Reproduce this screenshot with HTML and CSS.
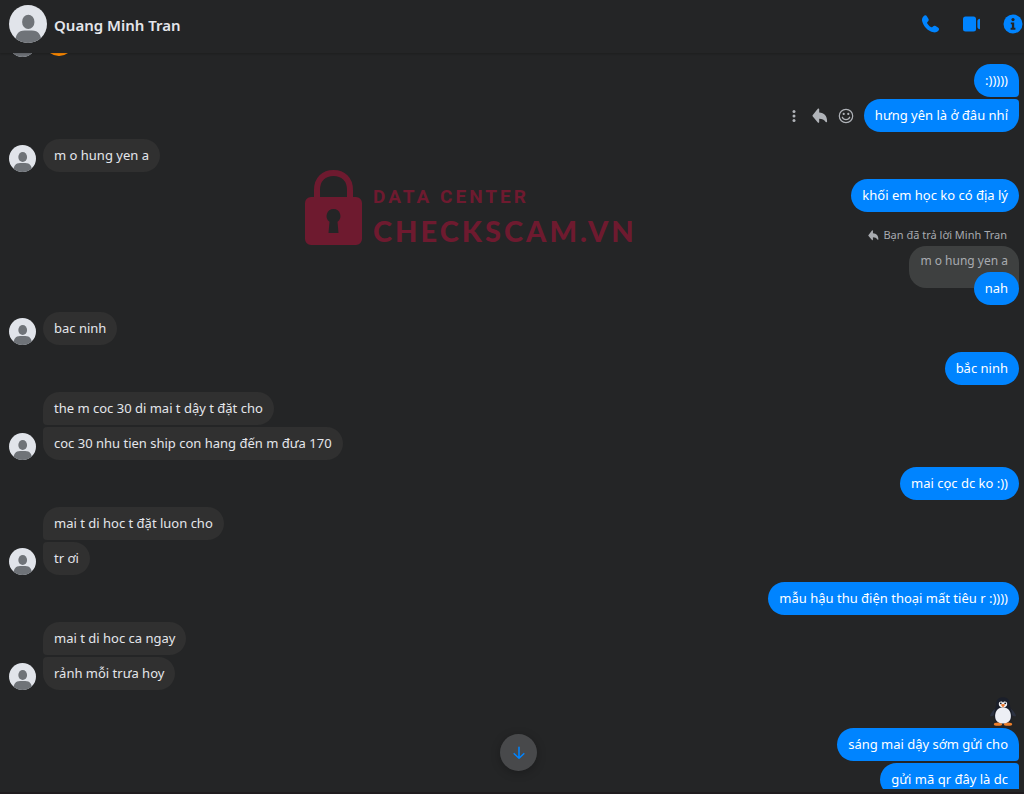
FILE: index.html
```html
<!DOCTYPE html>
<html lang="vi">
<head>
<meta charset="utf-8">
<meta name="viewport" content="width=device-width, initial-scale=1">
<title>Quang Minh Tran</title>
<link rel="stylesheet" href="styles.css">
</head>
<body>
<svg class="defs" aria-hidden="true">
  <defs>
    <clipPath id="disc"><circle cx="20" cy="20" r="20"/></clipPath>
    <symbol id="person" viewBox="0 0 40 40">
      <circle cx="20" cy="20" r="20" fill="#e1e4ea"/>
      <g clip-path="url(#disc)" fill="#6f7378">
        <ellipse cx="20.300" cy="17.800" rx="6.500" ry="7.500"/>
        <path d="M6.500 40c0-8.500 3-13.200 10-13.200h7.600c7 0 10 4.700 10 13.200z"/>
      </g>
    </symbol>
    <symbol id="reply" viewBox="0 0 16 16">
      <path d="M7.200 1.300v3.300c5 .3 8 3.500 7.900 8.900 0 .8-.9 1-1.400.4-1.500-2.100-3.500-3.100-6.500-3.200v3.200c0 .9-.8 1.200-1.400.6L.8 8.600c-.5-.5-.5-1 0-1.500L5.800.8c.6-.6 1.400-.3 1.400.5z" fill="currentColor"/>
    </symbol>
  </defs>
</svg>
<div class="app">
  <header class="header">
    <svg class="header-avatar" aria-hidden="true"><use href="#person"/></svg>
    <h1 class="title">Quang Minh Tran</h1>
    <div class="tools">
      <button class="tool" type="button" aria-label="Gọi thoại">
        <svg viewBox="0 0 20 20" fill="currentColor"><path d="M2.600 2.200C3.800 1 5.200 1.100 6 2.400l1.400 2.400c.6 1 .4 1.800-.4 2.600l-.6.600c-.4.400-.4.900-.1 1.400 1 1.600 2.100 2.700 3.700 3.700.5.300 1 .3 1.400-.1l.6-.6c.8-.8 1.600-1 2.600-.4l2.400 1.400c1.300.8 1.400 2.200.3 3.400-1.300 1.300-3 1.900-4.800 1.500C6.800 17 2.600 12.600 1.100 7c-.4-1.800.2-3.500 1.500-4.800z"/></svg>
      </button>
      <button class="tool" type="button" aria-label="Gọi video">
        <svg viewBox="0 0 20 20" fill="currentColor"><rect x="1" y="2.500" width="13" height="15" rx="2.500"/><path d="M15.400 7c0-.6.2-1 .7-1.400l.9-.7c.5-.4 1-.1 1 .5v9.200c0 .6-.5.900-1 .5l-.9-.7c-.5-.4-.7-.8-.7-1.400z"/></svg>
      </button>
      <button class="tool" type="button" aria-label="Thông tin">
        <svg viewBox="0 0 20 20"><circle cx="10" cy="10" r="9.500" fill="currentColor"/><circle cx="10" cy="5.600" r="1.600" fill="#242526"/><path d="M7.800 8.400h3.400v5.400h1.200v1.900H7.600v-1.900h1.300v-3.500H7.800z" fill="#242526"/></svg>
      </button>
    </div>
  </header>

  <main class="chat">
    <div class="thread">
      <section class="row">
        <svg class="avatar" aria-hidden="true"><use href="#person"/></svg>
        <svg class="smiley" viewBox="0 0 32 32" role="img" aria-label="Mặt cười"><circle cx="16" cy="16" r="15" fill="#ff8a00"/></svg>
      </section>

      <section class="out">
        <p class="bubble mine joined-below">:)))))</p>
        <div class="line">
          <div class="actions">
            <button class="act" type="button" aria-label="Xem thêm"><svg viewBox="0 0 16 16" fill="currentColor"><circle cx="8" cy="3.500" r="1.500"/><circle cx="8" cy="8" r="1.500"/><circle cx="8" cy="12.500" r="1.500"/></svg></button>
            <button class="act" type="button" aria-label="Trả lời"><svg><use href="#reply"/></svg></button>
            <button class="act" type="button" aria-label="Bày tỏ cảm xúc"><svg viewBox="0 0 16 16" fill="none" stroke="currentColor" stroke-width="1.200"><circle cx="8" cy="8" r="6.700"/><path d="M4.300 9.200c1.300 3.200 6.100 3.200 7.400 0" stroke-linecap="round"/><circle cx="5.700" cy="5.900" r=".5" fill="currentColor"/><circle cx="10.300" cy="5.900" r=".5" fill="currentColor"/></svg></button>
          </div>
          <p class="bubble mine joined-above">hưng yên là ở đâu nhỉ</p>
        </div>
      </section>

      <section class="row">
        <svg class="avatar" aria-hidden="true"><use href="#person"/></svg>
        <div class="in"><p class="bubble">m o hung yen a</p></div>
      </section>

      <section class="out"><p class="bubble mine">khối em học ko có địa lý</p></section>

      <section class="out">
        <p class="reply-label"><svg class="reply-icon" aria-hidden="true"><use href="#reply"/></svg>Bạn đã trả lời Minh Tran</p>
        <blockquote class="quote">m o hung yen a</blockquote>
        <p class="bubble mine answer">nah</p>
      </section>

      <section class="row">
        <svg class="avatar" aria-hidden="true"><use href="#person"/></svg>
        <div class="in"><p class="bubble">bac ninh</p></div>
      </section>

      <section class="out"><p class="bubble mine">bắc ninh</p></section>

      <section class="row">
        <svg class="avatar" aria-hidden="true"><use href="#person"/></svg>
        <div class="in">
          <p class="bubble joined-below">the m coc 30 di mai t dậy t đặt cho</p>
          <p class="bubble joined-above">coc 30 nhu tien ship con hang đến m đưa 170</p>
        </div>
      </section>

      <section class="out"><p class="bubble mine">mai cọc dc ko :))</p></section>

      <section class="row">
        <svg class="avatar" aria-hidden="true"><use href="#person"/></svg>
        <div class="in">
          <p class="bubble joined-below">mai t di hoc t đặt luon cho</p>
          <p class="bubble joined-above">tr ơi</p>
        </div>
      </section>

      <section class="out"><p class="bubble mine">mẫu hậu thu điện thoại mất tiêu r :))))</p></section>

      <section class="row">
        <svg class="avatar" aria-hidden="true"><use href="#person"/></svg>
        <div class="in">
          <p class="bubble joined-below">mai t di hoc ca ngay</p>
          <p class="bubble joined-above">rảnh mỗi trưa hoy</p>
        </div>
      </section>

      <section class="out">
        <svg class="penguin" viewBox="0 0 28 29" role="img" aria-label="Chim cánh cụt">
          <path d="M8.500 10C4.500 12.500 2 15.500.8 19.300c2.200.2 4.700-.8 6.700-2.800zM19.500 10c4 2.500 6.500 5.500 7.700 9.300-2.200.2-4.700-.8-6.700-2.800z" fill="#2c3242"/>
          <path d="M14 .3c-4.300 0-6.800 2.500-6.800 6.700 0 3.300-2.400 6.500-2.400 11.800 0 5.200 3.500 8.400 9.200 8.400s9.200-3.200 9.200-8.400c0-5.300-2.400-8.500-2.400-11.800C20.800 2.800 18.300.3 14 .3z" fill="#1b1f2a"/>
          <ellipse cx="9" cy="27.200" rx="4.200" ry="1.600" fill="#ee7f2b"/>
          <ellipse cx="19" cy="27.200" rx="4.200" ry="1.600" fill="#ee7f2b"/>
          <path d="M14 10.300c-4.700 0-7.900 3.700-7.900 8.700 0 4.700 3 7.400 7.900 7.400s7.900-2.700 7.900-7.400c0-5-3.200-8.700-7.900-8.700z" fill="#edeff5"/>
          <path d="M14 5.800c-.6-2-4.200-1.900-4.200 1.200 0 2.200 1.600 3.600 4.200 3.600s4.200-1.400 4.200-3.600c0-3.100-3.600-3.200-4.200-1.200z" fill="#f2f3f7"/>
          <circle cx="11.800" cy="6.300" r=".9" fill="#161a20"/><circle cx="16.200" cy="6.300" r=".9" fill="#161a20"/>
          <path d="M11.800 7.800c1-1 3.400-1 4.400 0L14 10.600z" fill="#ee762b"/>
        </svg>
        <p class="bubble mine joined-below">sáng mai dậy sớm gửi cho</p>
        <p class="bubble mine joined-above joined-below">gửi mã qr đây là dc</p>
      </section>
    </div>

    <div class="watermark">
      <svg class="lock" viewBox="0 0 57 75" aria-hidden="true">
        <path d="M12 30V20C12 9 19 3 28.500 3S45 9 45 20v10" fill="none" stroke="#6e1a2f" stroke-width="6"/>
        <path fill-rule="evenodd" fill="#6e1a2f" d="M6 27h45a6 6 0 0 1 6 6v36a6 6 0 0 1-6 6H6a6 6 0 0 1-6-6V33a6 6 0 0 1 6-6zM28.500 39a7 7 0 0 0-4 12.700L23.500 63h10l-1-11.300A7 7 0 0 0 28.500 39z"/>
      </svg>
      <div class="mark-text">
        <span class="mark-small">DATA CENTER</span>
        <span class="mark-big">CHECKSCAM.VN</span>
      </div>
    </div>

    <button class="to-bottom" type="button" aria-label="Cuộn xuống cuối">
      <svg viewBox="0 0 16 16" fill="none" stroke="currentColor" stroke-width="1.800" stroke-linecap="round" stroke-linejoin="round"><path d="M8 1.500v12.500M2.500 8.800 8 14l5.500-5.200"/></svg>
    </button>
  </main>
  <footer class="edge"></footer>
</div>
</body>
</html>
```
FILE: styles.css
```css
* {
  box-sizing: border-box;
}

body {
  margin: 0;
  background: #242526;
  color: #e4e6eb;
  font: 13px/19px "Noto Sans", "Open Sans", sans-serif;
}

p,
h1,
blockquote {
  margin: 0;
}

button {
  display: flex;
  padding: 0;
  border: 0;
  background: none;
  color: inherit;
}

.defs {
  position: absolute;
  width: 0;
  height: 0;
}

.app {
  display: flex;
  flex-direction: column;
  height: 100vh;
}

.header {
  display: flex;
  align-items: center;
  gap: 7px;
  height: 53px;
  padding: 0 1px 6px 9px;
  box-shadow: 0 1px 2px rgba(0, 0, 0, 0.2);
  z-index: 1;
}

.header-avatar {
  width: 38px;
  height: 38px;
}

.title {
  flex: 1;
  padding-top: 3px;
  font-size: 15px;
  line-height: 22px;
  font-weight: 600;
}

.tools {
  display: flex;
  gap: 21px;
  color: #0084ff;
}

.tool,
.tool svg {
  width: 20px;
  height: 20px;
}

.chat {
  position: relative;
  flex: 1;
  min-height: 0;
  overflow: hidden;
}

.thread {
  display: flex;
  flex-direction: column;
  gap: 7px;
  margin-top: -28px;
  padding: 0 5px 0 9px;
}

.row {
  display: flex;
  align-items: flex-end;
  gap: 7px;
}

.avatar {
  flex: none;
  width: 27px;
  height: 27px;
}

.smiley {
  width: 32px;
  height: 32px;
}

.in,
.out {
  display: flex;
  flex-direction: column;
  align-items: flex-start;
  gap: 2px;
}

.out {
  align-items: flex-end;
}

.line,
.actions {
  display: flex;
  align-items: center;
  gap: 10px;
}

.actions {
  color: #b0b3b8;
}

.act,
.act svg {
  width: 16px;
  height: 16px;
}

.bubble {
  padding: 7px 11px;
  border-radius: 17px;
  background: #303030;
}

.mine {
  background: #0084ff;
  color: #fff;
}

.bubble.joined-below {
  border-bottom-left-radius: 4px;
}

.bubble.joined-above {
  border-top-left-radius: 4px;
}

.mine.joined-below {
  border-bottom-left-radius: 17px;
  border-bottom-right-radius: 4px;
}

.mine.joined-above {
  border-top-left-radius: 17px;
  border-top-right-radius: 4px;
}

.reply-label {
  display: flex;
  align-items: center;
  gap: 4px;
  padding: 7px 12px 0 0;
  color: #a8abb0;
  font-size: 11px;
  line-height: 18px;
}

.reply-icon {
  width: 11px;
  height: 11px;
}

.quote {
  padding: 6px 11px 18px;
  border-radius: 17px 17px 4px 17px;
  background: #3e4040;
  color: #a8abb0;
  font-size: 12px;
  line-height: 18px;
}

.answer {
  margin-top: -18px;
}

.penguin {
  width: 28px;
  height: 29px;
  margin-right: 2px;
}

.watermark {
  position: absolute;
  top: 117px;
  left: 305px;
  display: flex;
  gap: 11px;
  color: #6e1a2f;
}

.lock {
  width: 57px;
  height: 75px;
}

.mark-text {
  display: flex;
  flex-direction: column;
  padding-top: 14px;
}

.mark-small {
  font: 700 19px/26px Roboto, sans-serif;
  letter-spacing: 3px;
}

.mark-big {
  font: 900 29px/42px Lato, sans-serif;
  letter-spacing: 3px;
}

.to-bottom {
  position: absolute;
  bottom: 18px;
  left: 50%;
  align-items: center;
  justify-content: center;
  width: 37px;
  height: 37px;
  margin-left: -12px;
  border-radius: 50%;
  background: #48494b;
  box-shadow: 0 2px 10px rgba(0, 0, 0, 0.25);
  color: #0084ff;
}

.to-bottom svg {
  width: 14px;
  height: 14px;
}

.edge {
  height: 5px;
  border-bottom: 2px solid #1f1c1f;
}
```
